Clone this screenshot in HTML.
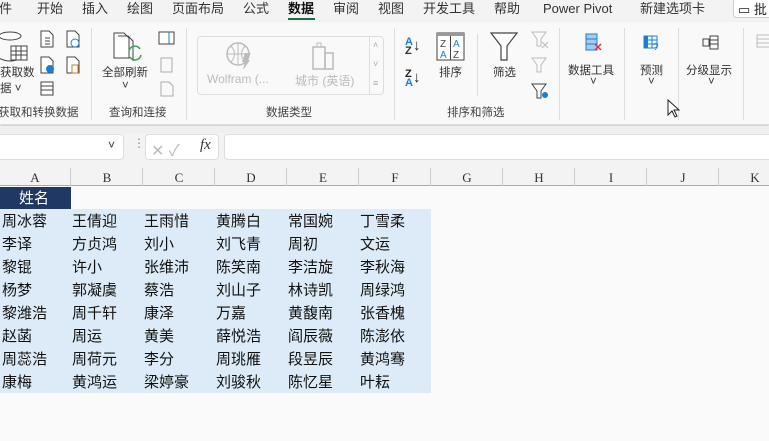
<!DOCTYPE html>
<html><head><meta charset="utf-8"><style>
*{margin:0;padding:0;box-sizing:border-box}
body{width:769px;height:441px;overflow:hidden;background:#fafafa;font-family:"Liberation Sans","Noto Sans CJK SC",sans-serif;position:relative;color:#222}
.a{position:absolute;white-space:nowrap}
.tab{top:0px;font-size:13px;color:#333;line-height:17px}
.rb{font-size:11.5px;color:#333}
.gl{font-size:11.5px;color:#444}
.sep{position:absolute;width:1px;background:#ddd}
.ch{top:170px;font-family:"Liberation Serif",serif;font-size:13px;color:#333;width:72px;text-align:center}
.cl{position:absolute;top:168px;width:1px;height:18px;background:#ccc}
.cell{position:absolute;white-space:nowrap;font-size:15px;color:#111;font-family:"Noto Sans CJK SC",sans-serif;line-height:23px}
</style></head><body>
<div class="a" style="left:0;top:0;width:769px;height:22px;background:#f3f3f3"></div>
<div class="a tab" style="left:-1px">件</div>
<div class="a tab" style="left:37px">开始</div>
<div class="a tab" style="left:82px">插入</div>
<div class="a tab" style="left:127px">绘图</div>
<div class="a tab" style="left:172px">页面布局</div>
<div class="a tab" style="left:243px">公式</div>
<div class="a tab" style="left:288px;font-weight:bold;color:#111">数据</div>
<div class="a" style="left:288px;top:18px;width:27px;height:2px;background:#1e6b40"></div>
<div class="a tab" style="left:333px">审阅</div>
<div class="a tab" style="left:378px">视图</div>
<div class="a tab" style="left:423px">开发工具</div>
<div class="a tab" style="left:494px">帮助</div>
<div class="a tab" style="left:543px;top:0px">Power Pivot</div>
<div class="a tab" style="left:640px">新建选项卡</div>
<div class="a" style="left:733px;top:-2px;width:40px;height:20px;border:1px solid #ccc;border-radius:4px;background:#fff;font-size:13px;padding-left:4px">▭ 批</div>
<div class="a" style="left:0;top:22px;width:769px;height:103px;background:#f9f9f9;border-bottom:1px solid #ddd;box-shadow:0 2px 3px #ccc"></div>
<div class="a" style="left:0;top:126px;width:769px;height:7px;background:#efefef"></div>
<svg class="a" style="left:0;top:30px" width="30" height="34"><ellipse cx="10" cy="6" rx="11" ry="4" fill="none" stroke="#444"/><path d="M-1 6v22q11 6 22 0" fill="none" stroke="#444"/><rect x="11" y="16" width="16" height="14" fill="#fff" stroke="#444"/><path d="M11 21h16M11 25h16M16 16v14M21 16v14" stroke="#444"/></svg>
<div class="a rb" style="left:0;top:64px">获取数</div>
<div class="a rb" style="left:0;top:80px">据 ˅</div>
<svg class="a" style="left:40px;top:30px" width="50" height="70"><path d="M1 1h8l4 4v12H1z" fill="#fff" stroke="#444"/><path d="M5 8h5M5 11h5M5 14h5" stroke="#444"/><path d="M27 1h8l4 4v12H27z" fill="#fff" stroke="#444"/><circle cx="35" cy="13" r="4" fill="#fff" stroke="#1a7fd0"/><path d="M1 27h8l4 4v12H1z" fill="#fff" stroke="#444"/><circle cx="10" cy="39" r="4" fill="#1a7fd0"/><path d="M27 27h8l4 4v12H27z" fill="#fff" stroke="#444"/><rect x="32" y="35" width="6" height="8" fill="#fff" stroke="#e07020"/><rect x="1" y="52" width="12" height="13" fill="#fff" stroke="#444"/><path d="M1 56h12M1 60h12" stroke="#444"/></svg>
<div class="a gl" style="left:-2px;top:104px">获取和转换数据</div>
<div class="sep" style="left:91px;top:28px;height:92px"></div>
<svg class="a" style="left:113px;top:32px" width="32" height="32"><path d="M1 1h10l5 5v20H1z" fill="#fff" stroke="#444"/><path d="M5 4h10l5 5v20" fill="none" stroke="#444"/><path d="M16 19a6 6 0 0 1 11-2M28 23a6 6 0 0 1-11 2" fill="none" stroke="#3aa655" stroke-width="1.6"/></svg>
<div class="a rb" style="left:102px;top:64px">全部刷新</div>
<div class="a rb" style="left:122px;top:80px">˅</div>
<svg class="a" style="left:158px;top:30px" width="20" height="70"><rect x="1" y="2" width="15" height="12" fill="#fff" stroke="#444"/><path d="M11 2v12" stroke="#1a7fd0"/><rect x="3" y="28" width="11" height="14" fill="none" stroke="#aaa"/><path d="M3 52h8l4 4v10H3z" fill="none" stroke="#aaa"/></svg>
<div class="a gl" style="left:109px;top:104px">查询和连接</div>
<div class="sep" style="left:186px;top:28px;height:92px"></div>
<div class="a" style="left:197px;top:36px;width:187px;height:59px;border:1px solid #ddd;border-radius:4px;background:#f9f9f9"></div>
<div class="a" style="left:369px;top:36px;width:1px;height:59px;background:#ddd"></div>
<svg class="a" style="left:225px;top:41px" width="30" height="32"><circle cx="13" cy="13" r="11" fill="none" stroke="#bbb" stroke-width="1.5"/><path d="M2 13h22M13 2v22M6 5q7 8 0 16M20 5q-7 8 0 16" fill="none" stroke="#bbb"/><path d="M20 12l6 0-4 7 3 0-7 10 2-8-3 0z" fill="#bbb"/></svg>
<div class="a" style="left:207px;top:72px;font-size:12px;color:#bbb">Wolfram (...</div>
<svg class="a" style="left:310px;top:41px" width="26" height="30"><rect x="3" y="6" width="12" height="22" fill="none" stroke="#bbb" stroke-width="1.5"/><rect x="7" y="2" width="4" height="4" fill="none" stroke="#bbb"/><rect x="15" y="12" width="8" height="16" fill="none" stroke="#bbb" stroke-width="1.5"/></svg>
<div class="a" style="left:295px;top:72px;font-size:12px;color:#bbb">城市 (英语)</div>
<div class="a" style="left:373px;top:36px;font-size:9px;color:#aaa;line-height:19px">˄<br>˅<br>≡</div>
<div class="a gl" style="left:266px;top:104px">数据类型</div>
<div class="sep" style="left:394px;top:28px;height:92px"></div>
<div class="a" style="left:405px;top:38px;font-size:11px;line-height:9px;color:#1a7fd0;font-weight:bold">A<br><span style="color:#333">Z</span></div>
<div class="a" style="left:413px;top:37px;font-size:15px">↓</div>
<div class="a" style="left:405px;top:70px;font-size:11px;line-height:9px;font-weight:bold">Z<br><span style="color:#1a7fd0">A</span></div>
<div class="a" style="left:413px;top:69px;font-size:15px">↓</div>
<svg class="a" style="left:436px;top:32px" width="30" height="30"><rect x="1" y="1" width="27" height="27" fill="#fff" stroke="#444"/><rect x="1" y="1" width="27" height="3" fill="#999"/><path d="M14.5 4v24" stroke="#444"/><text x="4" y="15" font-size="10" fill="#444" font-family="Liberation Sans">Z</text><text x="4" y="26" font-size="10" fill="#1a7fd0" font-family="Liberation Sans">A</text><text x="17" y="15" font-size="10" fill="#1a7fd0" font-family="Liberation Sans">A</text><text x="17" y="26" font-size="10" fill="#444" font-family="Liberation Sans">Z</text></svg>
<div class="a rb" style="left:439px;top:64px">排序</div>
<div class="sep" style="left:477px;top:34px;height:62px"></div>
<svg class="a" style="left:490px;top:32px" width="30" height="30"><path d="M1 1h26L17 14v14h-6V14z" fill="#fff" stroke="#444" stroke-width="1.2"/></svg>
<div class="a rb" style="left:493px;top:64px">筛选</div>
<svg class="a" style="left:531px;top:31px" width="20" height="72"><path d="M1 1h14L10 8v7H6V8z" fill="none" stroke="#bbb"/><path d="M11 11l6 6M17 11l-6 6" stroke="#bbb"/><path d="M1 27h14L10 34v7H6v-7z" fill="none" stroke="#bbb"/><path d="M1 53h14L10 60v7H6v-7z" fill="none" stroke="#444"/><circle cx="14" cy="64" r="3" fill="#1a7fd0"/></svg>
<div class="a gl" style="left:447px;top:104px">排序和筛选</div>
<div class="sep" style="left:559px;top:28px;height:92px"></div>
<svg class="a" style="left:585px;top:33px" width="20" height="20"><rect x="1" y="1" width="11" height="16" fill="#a9cbeb" stroke="#1a7fd0"/><path d="M1 6h11M1 11h11" stroke="#1a7fd0"/><path d="M10 11l6 6M16 11l-6 6" stroke="#e03030" stroke-width="1.5"/></svg>
<div class="a rb" style="left:568px;top:62px">数据工具</div>
<div class="a rb" style="left:590px;top:76px">˅</div>
<div class="sep" style="left:624px;top:28px;height:92px"></div>
<svg class="a" style="left:643px;top:35px" width="20" height="16"><rect x="1" y="1" width="13" height="12" fill="none" stroke="#1a7fd0"/><rect x="1" y="1" width="4" height="12" fill="#1a7fd0"/><path d="M1 5h13M1 9h13M9 1v12" stroke="#1a7fd0"/><text x="10" y="15" font-size="10" fill="#1a7fd0" font-family="Liberation Sans">?</text></svg>
<div class="a rb" style="left:640px;top:62px">预测</div>
<div class="a rb" style="left:648px;top:76px">˅</div>
<div class="sep" style="left:678px;top:28px;height:92px"></div>
<svg class="a" style="left:702px;top:35px" width="18" height="16"><rect x="1" y="4" width="6" height="7" fill="none" stroke="#444"/><rect x="8" y="1" width="8" height="13" fill="none" stroke="#444"/><path d="M8 5h8M8 9h8" stroke="#444"/></svg>
<div class="a rb" style="left:686px;top:62px">分级显示</div>
<div class="a rb" style="left:708px;top:76px">˅</div>
<div class="sep" style="left:743px;top:28px;height:92px"></div>
<svg class="a" style="left:756px;top:34px" width="13" height="14"><rect x="1" y="1" width="14" height="12" fill="none" stroke="#bbb"/><path d="M1 5h14M1 9h14" stroke="#bbb"/></svg>
<svg class="a" style="left:667px;top:99px" width="14" height="20"><path d="M1 1v15l4-4 3 6 2-1-3-6h5z" fill="#fff" stroke="#222"/></svg>
<div class="a" style="left:0;top:133px;width:769px;height:35px;background:#f3f3f3"></div>
<div class="a" style="left:-4px;top:134px;width:128px;height:26px;border:1px solid #ddd;border-radius:4px;background:#fff"></div>
<div class="a" style="left:108px;top:138px;font-size:12px;color:#333">˅</div>
<div class="a" style="left:133px;top:136px;font-size:12px;color:#888">⋮</div>
<div class="a" style="left:145px;top:134px;width:74px;height:26px;border:1px solid #ddd;border-radius:4px;background:#fff"></div>
<div class="a" style="left:151px;top:137px;font-size:16px;color:#bbb">✕ ✓</div>
<div class="a" style="left:200px;top:137px;font-size:15px;font-style:italic;font-family:'Liberation Serif',serif;color:#333">fx</div>
<div class="a" style="left:224px;top:134px;width:550px;height:26px;border:1px solid #ddd;border-radius:4px;background:#fff"></div>
<div class="a" style="left:0;top:168px;width:769px;height:18px;background:#f3f3f3;border-bottom:1px solid #aaa"></div>
<div class="cl" style="left:70px"></div><div class="cl" style="left:142px"></div><div class="cl" style="left:214px"></div><div class="cl" style="left:286px"></div><div class="cl" style="left:358px"></div><div class="cl" style="left:430px"></div><div class="cl" style="left:502px"></div><div class="cl" style="left:574px"></div><div class="cl" style="left:646px"></div><div class="cl" style="left:718px"></div>
<div class="a ch" style="left:-1px">A</div><div class="a ch" style="left:71px">B</div><div class="a ch" style="left:143px">C</div><div class="a ch" style="left:215px">D</div><div class="a ch" style="left:287px">E</div><div class="a ch" style="left:359px">F</div><div class="a ch" style="left:431px">G</div><div class="a ch" style="left:503px">H</div><div class="a ch" style="left:575px">I</div><div class="a ch" style="left:647px">J</div><div class="a ch" style="left:719px">K</div>
<div class="a" style="left:0;top:187px;width:71px;height:22px;background:#203864"></div>
<div class="cell" style="left:19px;top:186px;color:#fff">姓名</div>
<div class="a" style="left:0;top:209px;width:431px;height:184px;background:#dcebf7"></div>
<div style="position:absolute;left:2px;top:209px;width:440px;height:190px">
<div class="cell" style="left:0;top:0">周冰蓉</div><div class="cell" style="left:70px;top:0">王倩迎</div><div class="cell" style="left:142px;top:0">王雨惜</div><div class="cell" style="left:214px;top:0">黄腾白</div><div class="cell" style="left:286px;top:0">常国婉</div><div class="cell" style="left:358px;top:0">丁雪柔</div>
<div class="cell" style="left:0;top:23px">李译</div><div class="cell" style="left:70px;top:23px">方贞鸿</div><div class="cell" style="left:142px;top:23px">刘小</div><div class="cell" style="left:214px;top:23px">刘飞青</div><div class="cell" style="left:286px;top:23px">周初</div><div class="cell" style="left:358px;top:23px">文运</div>
<div class="cell" style="left:0;top:46px">黎锟</div><div class="cell" style="left:70px;top:46px">许小</div><div class="cell" style="left:142px;top:46px">张维沛</div><div class="cell" style="left:214px;top:46px">陈笑南</div><div class="cell" style="left:286px;top:46px">李洁旋</div><div class="cell" style="left:358px;top:46px">李秋海</div>
<div class="cell" style="left:0;top:69px">杨梦</div><div class="cell" style="left:70px;top:69px">郭凝虞</div><div class="cell" style="left:142px;top:69px">蔡浩</div><div class="cell" style="left:214px;top:69px">刘山子</div><div class="cell" style="left:286px;top:69px">林诗凯</div><div class="cell" style="left:358px;top:69px">周绿鸿</div>
<div class="cell" style="left:0;top:92px">黎潍浩</div><div class="cell" style="left:70px;top:92px">周千轩</div><div class="cell" style="left:142px;top:92px">康泽</div><div class="cell" style="left:214px;top:92px">万嘉</div><div class="cell" style="left:286px;top:92px">黄馥南</div><div class="cell" style="left:358px;top:92px">张香槐</div>
<div class="cell" style="left:0;top:115px">赵菡</div><div class="cell" style="left:70px;top:115px">周运</div><div class="cell" style="left:142px;top:115px">黄美</div><div class="cell" style="left:214px;top:115px">薛悦浩</div><div class="cell" style="left:286px;top:115px">阎辰薇</div><div class="cell" style="left:358px;top:115px">陈澎依</div>
<div class="cell" style="left:0;top:138px">周蕊浩</div><div class="cell" style="left:70px;top:138px">周荷元</div><div class="cell" style="left:142px;top:138px">李分</div><div class="cell" style="left:214px;top:138px">周珧雁</div><div class="cell" style="left:286px;top:138px">段昱辰</div><div class="cell" style="left:358px;top:138px">黄鸿骞</div>
<div class="cell" style="left:0;top:161px">康梅</div><div class="cell" style="left:70px;top:161px">黄鸿运</div><div class="cell" style="left:142px;top:161px">梁婷豪</div><div class="cell" style="left:214px;top:161px">刘骏秋</div><div class="cell" style="left:286px;top:161px">陈忆星</div><div class="cell" style="left:358px;top:161px">叶耘</div>
</div>
</body></html>
